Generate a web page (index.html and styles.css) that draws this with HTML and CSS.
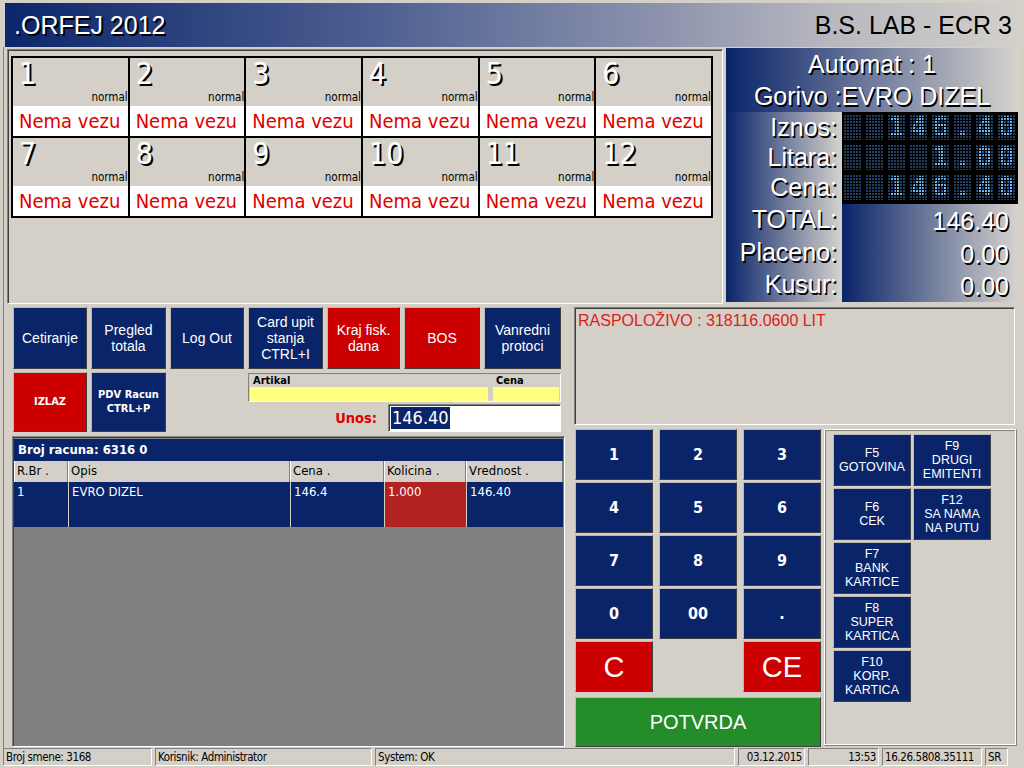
FILE: index.html
```html
<!DOCTYPE html>
<html lang="sr">
<head>
<meta charset="utf-8">
<title>ORFEJ 2012</title>
<link rel="stylesheet" href="styles.css">
</head>
<body>
<div class="window">
  <header class="titlebar">
    <span class="app-name">.ORFEJ 2012</span>
    <span class="app-dev">B.S. LAB - ECR 3</span>
  </header>

  <div class="content">
    <div class="top">
      <section class="pumps">
        <div class="pump-grid">
          <div class="pump"><div class="pump-head"><span class="pump-no">1</span><span class="pump-mode">normal</span></div><div class="pump-status">Nema vezu</div></div>
          <div class="pump"><div class="pump-head"><span class="pump-no">2</span><span class="pump-mode">normal</span></div><div class="pump-status">Nema vezu</div></div>
          <div class="pump"><div class="pump-head"><span class="pump-no">3</span><span class="pump-mode">normal</span></div><div class="pump-status">Nema vezu</div></div>
          <div class="pump"><div class="pump-head"><span class="pump-no">4</span><span class="pump-mode">normal</span></div><div class="pump-status">Nema vezu</div></div>
          <div class="pump"><div class="pump-head"><span class="pump-no">5</span><span class="pump-mode">normal</span></div><div class="pump-status">Nema vezu</div></div>
          <div class="pump"><div class="pump-head"><span class="pump-no">6</span><span class="pump-mode">normal</span></div><div class="pump-status">Nema vezu</div></div>
          <div class="pump"><div class="pump-head"><span class="pump-no">7</span><span class="pump-mode">normal</span></div><div class="pump-status">Nema vezu</div></div>
          <div class="pump"><div class="pump-head"><span class="pump-no">8</span><span class="pump-mode">normal</span></div><div class="pump-status">Nema vezu</div></div>
          <div class="pump"><div class="pump-head"><span class="pump-no">9</span><span class="pump-mode">normal</span></div><div class="pump-status">Nema vezu</div></div>
          <div class="pump"><div class="pump-head"><span class="pump-no">10</span><span class="pump-mode">normal</span></div><div class="pump-status">Nema vezu</div></div>
          <div class="pump"><div class="pump-head"><span class="pump-no">11</span><span class="pump-mode">normal</span></div><div class="pump-status">Nema vezu</div></div>
          <div class="pump"><div class="pump-head"><span class="pump-no">12</span><span class="pump-mode">normal</span></div><div class="pump-status">Nema vezu</div></div>
        </div>
      </section>

      <section class="info">
        <div class="info-head">
          <div class="info-line">Automat : 1</div>
          <div class="info-line">Gorivo :EVRO DIZEL</div>
        </div>
        <div class="info-body">
          <div class="labels">
            <div class="lbl lbl-led">Iznos:</div>
            <div class="lbl lbl-led">Litara:</div>
            <div class="lbl lbl-led">Cena:</div>
            <div class="lbl lbl-sum1">TOTAL:</div>
            <div class="lbl lbl-sum2">Placeno:</div>
            <div class="lbl lbl-sum3">Kusur:</div>
          </div>
          <div class="vals">
            <div class="led">
              <div class="led-row"><span class="led-c"></span><span class="led-c"></span><span class="led-c">1</span><span class="led-c">4</span><span class="led-c">6</span><span class="led-c">.</span><span class="led-c">4</span><span class="led-c">0</span></div>
              <div class="led-row"><span class="led-c"></span><span class="led-c"></span><span class="led-c"></span><span class="led-c"></span><span class="led-c">1</span><span class="led-c">.</span><span class="led-c">0</span><span class="led-c">0</span></div>
              <div class="led-row"><span class="led-c"></span><span class="led-c"></span><span class="led-c">1</span><span class="led-c">4</span><span class="led-c">6</span><span class="led-c">.</span><span class="led-c">4</span><span class="led-c">0</span></div>
            </div>
            <div class="sums">
              <div class="sum lbl-sum1">146.40</div>
              <div class="sum lbl-sum2">0.00</div>
              <div class="sum lbl-sum3">0.00</div>
            </div>
          </div>
        </div>
      </section>
    </div>

    <div class="bottom">
      <div class="left">
        <div class="cmds">
          <div class="btn navy">Cetiranje</div>
          <div class="btn navy">Pregled<br>totala</div>
          <div class="btn navy">Log Out</div>
          <div class="btn navy">Card upit<br>stanja<br>CTRL+I</div>
          <div class="btn red">Kraj fisk.<br>dana</div>
          <div class="btn red">BOS</div>
          <div class="btn navy">Vanredni<br>protoci</div>
          <div class="btn red small">IZLAZ</div>
          <div class="btn navy small">PDV Racun<br>CTRL+P</div>
          <div class="entry">
            <div class="article">
              <div class="field">
                <span class="field-lbl">Artikal</span>
                <span class="field-box"></span>
              </div>
              <div class="field">
                <span class="field-lbl">Cena</span>
                <span class="field-box"></span>
              </div>
            </div>
            <div class="unos">
              <span class="unos-lbl">Unos:</span>
              <div class="unos-input"><span class="sel">146.40</span></div>
            </div>
          </div>
        </div>

        <div class="receipt">
          <div class="receipt-title">Broj racuna: 6316 0</div>
          <div class="grid-row grid-head">
            <div class="gh">R.Br .</div>
            <div class="gh">Opis</div>
            <div class="gh">Cena .</div>
            <div class="gh">Kolicina .</div>
            <div class="gh">Vrednost .</div>
          </div>
          <div class="grid-row grid-data">
            <div class="gd">1</div>
            <div class="gd">EVRO DIZEL</div>
            <div class="gd">146.4</div>
            <div class="gd gd-hl">1.000</div>
            <div class="gd">146.40</div>
          </div>
        </div>
      </div>

      <div class="right">
        <div class="msg">RASPOLOŽIVO : 318116.0600 LIT</div>
        <div class="pay">
          <div class="keypad">
            <div class="btn navy key">1</div>
            <div class="btn navy key">2</div>
            <div class="btn navy key">3</div>
            <div class="btn navy key">4</div>
            <div class="btn navy key">5</div>
            <div class="btn navy key">6</div>
            <div class="btn navy key">7</div>
            <div class="btn navy key">8</div>
            <div class="btn navy key">9</div>
            <div class="btn navy key">0</div>
            <div class="btn navy key">00</div>
            <div class="btn navy key">.</div>
            <div class="btn red big key-c">C</div>
            <div class="btn red big key-ce">CE</div>
            <div class="btn green potvrda">POTVRDA</div>
          </div>
          <div class="fkeys">
            <div class="btn navy fk fk-a1">F5<br>GOTOVINA</div>
            <div class="btn navy fk fk-b1">F9<br>DRUGI<br>EMITENTI</div>
            <div class="btn navy fk fk-a2">F6<br>CEK</div>
            <div class="btn navy fk fk-b2">F12<br>SA NAMA<br>NA PUTU</div>
            <div class="btn navy fk fk-a3">F7<br>BANK<br>KARTICE</div>
            <div class="btn navy fk fk-a4">F8<br>SUPER<br>KARTICA</div>
            <div class="btn navy fk fk-a5">F10<br>KORP.<br>KARTICA</div>
          </div>
        </div>
      </div>
    </div>
  </div>

  <footer class="status">
    <div class="sp sp-1">Broj smene: 3168</div>
    <div class="sp sp-2">Korisnik: Administrator</div>
    <div class="sp sp-3">System: OK</div>
    <div class="sp sp-4 r">03.12.2015</div>
    <div class="sp sp-5 r">13:53</div>
    <div class="sp sp-6">16.26.5808.35111</div>
    <div class="sp sp-7">SR</div>
  </footer>
</div>
</body>
</html>
```

FILE: styles.css
```css
:root {
  --navy: #0a246a;
  --red: #cc0000;
  --face: #d4d0c8;
  --arial: "Liberation Sans", Arial, sans-serif;
  --tahoma: "DejaVu Sans Condensed", "DejaVu Sans", sans-serif;
  --grad: linear-gradient(90deg, #0a246a 0%, #d6d3cd 100%);
}

* { box-sizing: border-box; }

html, body {
  margin: 0;
  padding: 0;
}

body {
  width: 1024px;
  height: 768px;
  overflow: hidden;
  background: var(--face);
  font-family: var(--arial);
}

.window {
  width: 1024px;
  height: 768px;
  background: var(--face);
  padding-top: 3px;
}

/* ---------- title bar ---------- */
.titlebar {
  margin: 0 8px 0 5px;
  height: 44px;
  background: linear-gradient(90deg, #0c2669 0%, #4a5d90 35%, #8d93ad 65%, #b8b8bf 82%, #d2d0cb 100%);
  display: flex;
  align-items: center;
  justify-content: space-between;
  padding: 0 4px 0 9px;
  font-size: 25px;
  line-height: 1;
}

.app-name {
  color: #fff;
  text-shadow: 2px 2px 0 #000;
}

.app-dev {
  color: #000;
}

/* ---------- content frame ---------- */
.content {
  margin-left: 3px;
  border-left: 1px solid #808080;
  padding-left: 3px;
  height: 701px;
}

.top {
  display: flex;
  align-items: flex-start;
  height: 257px;
  padding-top: 1px;
}

/* ---------- pumps ---------- */
.pumps {
  width: 716px;
  height: 255px;
  margin-top: 1px;
  border: 1px solid;
  border-color: #808080 #ffffff #ffffff #808080;
  box-shadow: inset 1px 1px 0 #404040;
  padding: 6px 0 0 3px;
}

.pump-grid {
  width: 702px;
  display: grid;
  grid-template-columns: repeat(6, 1fr);
  grid-template-rows: 78px 78px;
  gap: 2px;
  padding: 2px;
  background: #000;
}

.pump {
  display: flex;
  flex-direction: column;
  background: var(--face);
}

.pump-head {
  height: 48px;
  display: flex;
  flex-direction: column;
  padding: 1px 0 0 6px;
}

.pump-no {
  font-family: var(--tahoma);
  font-size: 30px;
  line-height: 30px;
  color: #fff;
  text-shadow: 2px 2px 0 #000;
}

.pump-mode {
  margin-top: auto;
  align-self: flex-end;
  font-family: var(--tahoma);
  font-size: 11.5px;
  line-height: 13px;
  color: #000;
  margin-bottom: 2px;
}

.pump-status {
  height: 30px;
  background: #fff;
  color: #e00000;
  font-family: var(--tahoma);
  font-size: 20px;
  line-height: 30px;
  padding-left: 6px;
  white-space: nowrap;
}

/* ---------- info panel ---------- */
.info {
  width: 292px;
  height: 254px;
  margin-left: 3px;
  display: flex;
  flex-direction: column;
  color: #fff;
  font-size: 25px;
  text-shadow: 1.5px 1.5px 0 #000;
}

.info-head {
  height: 64px;
  background: var(--grad);
}

.info-line {
  height: 32px;
  line-height: 32px;
  text-align: center;
}

.info-body {
  display: flex;
  height: 190px;
}

.labels {
  width: 116px;
  background: var(--grad);
  display: flex;
  flex-direction: column;
}

.lbl {
  text-align: right;
  padding-right: 5px;
}

.lbl-led { height: 30px; line-height: 30px; }
.lbl-sum1 { height: 34px; line-height: 34px; }
.lbl-sum2 { height: 33px; line-height: 33px; }
.lbl-sum3 { height: 31px; line-height: 31px; }

.vals {
  width: 176px;
  display: flex;
  flex-direction: column;
}

.led {
  height: 92px;
  background: #000;
  padding: 2px 0 0 1px;
  display: flex;
  flex-direction: column;
  gap: 4px;
}

.led-row {
  display: grid;
  grid-template-columns: repeat(8, 19px);
  column-gap: 3px;
  height: 26px;
}

.led-c {
  position: relative;
  display: block;
  height: 26px;
  background: #223d62;
  color: #6cbcfa;
  font-family: "DejaVu Sans Mono", monospace;
  font-weight: bold;
  font-size: 27px;
  line-height: 26px;
  text-align: center;
  text-shadow: none;
}

.led-c::after {
  content: "";
  position: absolute;
  inset: 0;
  background-image:
    linear-gradient(90deg, #000 1px, transparent 1px),
    linear-gradient(180deg, #000 1px, transparent 1px);
  background-size: 3px 3px, 3px 3px;
  pointer-events: none;
}

.sums {
  flex: 1;
  background: var(--grad);
  display: flex;
  flex-direction: column;
}

.sum {
  text-align: right;
  padding-right: 9px;
}

/* ---------- bottom ---------- */
.bottom {
  display: flex;
  height: 443px;
}

.left {
  width: 561px;
  padding: 3px 0 0 6px;
}

.btn {
  display: flex;
  align-items: center;
  justify-content: center;
  text-align: center;
  color: #fff;
  border: 1px solid;
  border-color: #b8b8b8 #404040 #404040 #b8b8b8;
  font-family: var(--arial);
  font-size: 14px;
  line-height: 16px;
}

.navy { background: var(--navy); }
.red { background: var(--red); }
.green { background: #248c28; }

.btn.small {
  font-family: var(--tahoma);
  font-weight: bold;
  font-size: 11px;
  line-height: 14px;
}

.cmds {
  display: grid;
  grid-template-columns: 74px 75px 74px 75px 73px 76px 77px;
  grid-template-rows: 62px 60px;
  column-gap: 4px;
  row-gap: 3px;
}

.entry {
  grid-column: 4 / span 4;
  display: flex;
  flex-direction: column;
  padding-top: 1px;
}

.article {
  height: 31px;
  border: 1px solid;
  border-color: #808080 #ffffff #ffffff #808080;
  display: grid;
  grid-template-columns: 1fr 66px;
  column-gap: 5px;
  padding: 0 1px;
}

.field {
  display: flex;
  flex-direction: column;
}

.field-lbl {
  font-family: var(--tahoma);
  font-weight: bold;
  font-size: 11px;
  line-height: 13px;
  color: #000;
  padding-left: 3px;
}

.field-box {
  height: 14px;
  background: #ffff80;
}

.unos {
  display: flex;
  justify-content: flex-end;
  align-items: center;
  gap: 11px;
  margin-top: 2px;
}

.unos-lbl {
  font-family: var(--tahoma);
  font-weight: bold;
  font-size: 14.5px;
  color: #e00000;
}

.unos-input {
  width: 173px;
  height: 28px;
  background: #fff;
  border: 1px solid;
  border-color: #808080 #ffffff #ffffff #808080;
  box-shadow: inset 1px 1px 0 #404040;
  padding: 2px 0 0 2px;
}

.sel {
  display: inline-block;
  background: var(--navy);
  color: #fff;
  font-family: var(--tahoma);
  font-size: 18px;
  line-height: 22px;
  padding: 0 1px;
}

/* ---------- receipt ---------- */
.receipt {
  margin: 4px 0 0 -1px;
  width: 553px;
  height: 311px;
  background: #808080;
  border: 1px solid;
  border-color: #808080 #ffffff #ffffff #808080;
  box-shadow: inset 1px 1px 0 #404040;
  padding: 2px 1px 0 1px;
  font-family: var(--tahoma);
  font-size: 13px;
}

.receipt-title {
  height: 22px;
  line-height: 22px;
  background: var(--navy);
  color: #fff;
  font-weight: bold;
  padding-left: 4px;
}

.grid-row {
  display: grid;
  grid-template-columns: 54px 222px 94px 82px 1fr;
}

.grid-head {
  height: 21px;
  background: var(--face);
}

.gh {
  line-height: 20px;
  padding-left: 3px;
  border-right: 1px solid #808080;
  box-shadow: inset 1px 0 0 #ffffff;
  color: #000;
}

.grid-data {
  height: 45px;
  background: var(--navy);
  color: #fff;
}

.gd {
  padding: 2px 0 0 3px;
  border-left: 1px solid #d4d0c8;
  line-height: 16px;
}

.gd:first-child { border-left: 0; }

.gd-hl { background: #b22222; }

/* ---------- right side ---------- */
.right {
  margin-left: 5px;
  width: 445px;
  padding-top: 3px;
}

.msg {
  margin-left: 1px;
  width: 441px;
  height: 118px;
  border: 1px solid;
  border-color: #808080 #ffffff #ffffff #808080;
  box-shadow: inset 1px 1px 0 #404040;
  color: #dc2020;
  font-size: 16px;
  line-height: 18px;
  padding: 4px 3px;
}

.pay {
  display: flex;
  margin-top: 4px;
}

.keypad {
  margin-left: 2px;
  display: grid;
  grid-template-columns: repeat(3, 78px);
  grid-template-rows: repeat(5, 51px) 53px;
  column-gap: 6px;
  row-gap: 2px;
}

.key {
  font-family: var(--tahoma);
  font-weight: bold;
  font-size: 16px;
}

.big {
  font-size: 29px;
  line-height: 30px;
}

.key-c { grid-column: 1; }
.key-ce { grid-column: 3; }

.potvrda {
  grid-column: 1 / span 3;
  margin-top: 3px;
  font-size: 20px;
}

.fkeys {
  margin-left: 3px;
  width: 193px;
  height: 317px;
  border: 1px solid;
  border-color: #ffffff #808080 #808080 #ffffff;
  box-shadow: inset -1px -1px 0 #ffffff, inset 1px 1px 0 #808080;
  display: grid;
  grid-template-columns: 78px 78px;
  grid-template-rows: repeat(5, 52px);
  gap: 2px;
  padding: 4px 0 0 8px;
  align-content: start;
}

.fk {
  font-size: 12.5px;
  line-height: 14px;
}

.fk-a1 { grid-column: 1; grid-row: 1; }
.fk-b1 { grid-column: 2; grid-row: 1; }
.fk-a2 { grid-column: 1; grid-row: 2; }
.fk-b2 { grid-column: 2; grid-row: 2; }
.fk-a3 { grid-column: 1; grid-row: 3; }
.fk-a4 { grid-column: 1; grid-row: 4; }
.fk-a5 { grid-column: 1; grid-row: 5; }

/* ---------- status bar ---------- */
.status {
  display: flex;
  gap: 3px;
  height: 19px;
  padding: 0 0 0 3px;
  font-family: var(--tahoma);
  font-size: 11.5px;
  letter-spacing: -0.4px;
  color: #000;
}

.sp {
  height: 18px;
  line-height: 17px;
  border: 1px solid;
  border-color: #808080 #ffffff #ffffff #808080;
  padding: 0 2px;
  white-space: nowrap;
  overflow: hidden;
}

.sp.r { text-align: right; }

.sp-1 { width: 149px; }
.sp-2 { width: 217px; }
.sp-3 { width: 360px; }
.sp-4 { width: 67px; }
.sp-5 { width: 71px; }
.sp-6 { width: 100px; }
.sp-7 { width: 23px; }
```
